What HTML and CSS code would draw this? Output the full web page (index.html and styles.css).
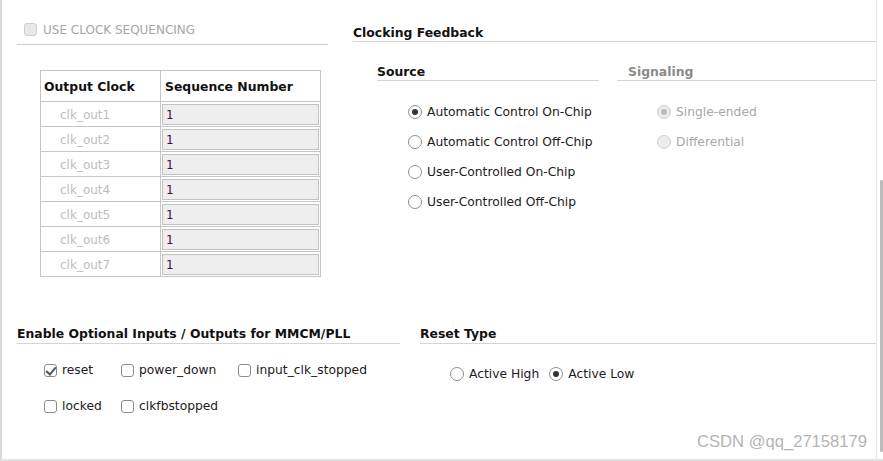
FILE: index.html
```html
<!DOCTYPE html>
<html>
<head>
<meta charset="utf-8">
<link rel="stylesheet" href="styles.css">
</head>
<body>
<div class="frame">
  <div class="content">
    <div class="top">
      <div class="seq">
        <div class="seq-head">
          <span class="cb disabled"></span>
          <span class="seq-label">USE CLOCK SEQUENCING</span>
        </div>
        <table class="seq-table">
          <tr><th class="c1">Output Clock</th><th class="c2">Sequence Number</th></tr>
          <tr><td class="name">clk_out1</td><td class="val"><div class="field">1</div></td></tr>
          <tr><td class="name">clk_out2</td><td class="val"><div class="field">1</div></td></tr>
          <tr><td class="name">clk_out3</td><td class="val"><div class="field">1</div></td></tr>
          <tr><td class="name">clk_out4</td><td class="val"><div class="field">1</div></td></tr>
          <tr><td class="name">clk_out5</td><td class="val"><div class="field">1</div></td></tr>
          <tr><td class="name">clk_out6</td><td class="val"><div class="field">1</div></td></tr>
          <tr><td class="name">clk_out7</td><td class="val"><div class="field">1</div></td></tr>
        </table>
      </div>
      <div class="fb">
        <div class="heading">Clocking Feedback</div>
        <div class="fb-body">
          <div class="source">
            <div class="subheading">Source</div>
            <div class="radios">
              <div class="opt"><span class="rd checked"></span>Automatic Control On-Chip</div>
              <div class="opt"><span class="rd"></span>Automatic Control Off-Chip</div>
              <div class="opt"><span class="rd"></span>User-Controlled On-Chip</div>
              <div class="opt"><span class="rd"></span>User-Controlled Off-Chip</div>
            </div>
          </div>
          <div class="signal">
            <div class="subheading muted">Signaling</div>
            <div class="radios">
              <div class="opt dim"><span class="rd disabled checked"></span>Single-ended</div>
              <div class="opt dim"><span class="rd disabled"></span>Differential</div>
            </div>
          </div>
        </div>
      </div>
    </div>
    <div class="bottom">
      <div class="io">
        <div class="heading">Enable Optional Inputs / Outputs for MMCM/PLL</div>
        <div class="io-grid">
          <div class="opt"><span class="cb checked"></span>reset</div>
          <div class="opt"><span class="cb"></span>power_down</div>
          <div class="opt"><span class="cb"></span>input_clk_stopped</div>
          <div class="opt"><span class="cb"></span>locked</div>
          <div class="opt"><span class="cb"></span>clkfbstopped</div>
        </div>
      </div>
      <div class="rst">
        <div class="heading">Reset Type</div>
        <div class="rst-row">
          <div class="opt"><span class="rd"></span>Active High</div>
          <div class="opt"><span class="rd checked"></span>Active Low</div>
        </div>
        <div class="watermark">CSDN @qq_27158179</div>
      </div>
    </div>
  </div>
  <div class="scroll">
    <div class="arrow up"></div>
    <div class="track"><div class="thumb"></div></div>
    <div class="arrow down"></div>
  </div>
</div>
</body>
</html>
```
FILE: styles.css
```css
* { box-sizing: border-box; }
html, body { margin: 0; padding: 0; background: #fff; }
body {
  font-family: "DejaVu Sans", Verdana, sans-serif;
  font-size: 12.3px;
  color: #1e1a22;
  width: 883px;
  height: 461px;
  overflow: hidden;
}
.frame {
  display: flex;
  width: 883px;
  height: 461px;
  border-left: 2px solid #d9d9d9;
  border-bottom: 2px solid #e2e2e2;
}
.content {
  flex: 1;
  border-right: 1px solid #e4e4e4;
  padding-left: 15px;
  display: flex;
  flex-direction: column;
}
.top { display: flex; height: 319px; }
.seq { width: 311px; padding-top: 22px; }
.seq-head {
  display: flex;
  align-items: center;
  gap: 6px;
  padding-left: 7px;
  height: 15px;
  border-bottom: 1px solid #cfcfcf;
  box-sizing: content-box;
  padding-bottom: 7px;
}
.seq-label { color: #a8a4aa; font-size: 12px; }

.cb {
  display: inline-block;
  width: 13px;
  height: 13px;
  border: 1px solid #8c8c8c;
  border-radius: 3px;
  background: #fff;
  position: relative;
  flex: none;
}
.cb.disabled { background: #e9e9ec; border-color: #cdcdd0; }
.cb.checked::after {
  content: "";
  position: absolute;
  left: 3px;
  top: 0px;
  width: 4px;
  height: 8px;
  border: solid #555;
  border-width: 0 2px 2px 0;
  transform: rotate(40deg);
}

.seq-table {
  margin: 25px 0 0 23px;
  border-collapse: collapse;
  width: 281px;
  font-size: 12px;
}
.seq-table th, .seq-table td { border: 1px solid #c6c6c6; padding: 0; }
.seq-table th {
  height: 31px;
  text-align: left;
  font-weight: bold;
  color: #111;
  padding-left: 3px;
  font-size: 12.4px;
}
.seq-table th.c2 { padding-left: 4px; }
.seq-table th.c1 { width: 120px; }
.seq-table td { height: 25px; }
.seq-table td.name { color: #bdbdbd; padding-left: 19px; padding-top: 1px; }
.seq-table td.val { padding: 1px; }
.field {
  height: 21px;
  background: #eeeeee;
  border: 1px solid #c2c2c2;
  font-family: "DejaVu Sans Mono", monospace;
  font-size: 12px;
  color: #4a0a46;
  padding-left: 3px;
  padding-top: 1px;
  line-height: 19px;
}

.fb { flex: 1; margin-left: 25px; padding-top: 24px; }
.heading {
  font-weight: bold;
  font-size: 12.4px;
  color: #111;
  height: 19px;
  padding-top: 1px;
  border-bottom: 1px solid #d4d4d4;
  line-height: 16px;
}
.fb .heading { height: 18px; }
.fb-body { display: flex; padding-left: 24px; padding-top: 22px; }
.source { width: 222px; }
.signal { flex: 1; margin-left: 18px; }
.subheading {
  font-weight: bold;
  font-size: 12.4px;
  color: #111;
  height: 17px;
  border-bottom: 1px solid #d4d4d4;
  line-height: 16px;
}
.signal .subheading { padding-left: 11px; }
.subheading.muted { color: #8a8a8a; }
.radios { display: flex; flex-direction: column; padding-top: 23px; padding-left: 31px; gap: 14px; }
.signal .radios { padding-left: 40px; }
.opt { display: flex; align-items: center; gap: 5px; height: 16px; white-space: nowrap; }
.opt.dim { color: #a9a6ac; }

.rd {
  display: inline-block;
  width: 14px;
  height: 14px;
  border: 1px solid #8e8e8e;
  border-radius: 50%;
  background: #fff;
  position: relative;
  flex: none;
}
.rd.checked::after {
  content: "";
  position: absolute;
  left: 3px; top: 3px;
  width: 6px; height: 6px;
  border-radius: 50%;
  background: #333;
}
.rd.disabled { border-color: #cfcfcf; background: #ececec; }
.rd.disabled.checked::after { background: #bdbdbd; }

.bottom { display: flex; flex: 1; }
.io { width: 383px; padding-top: 6px; }
.io-grid {
  display: grid;
  grid-template-columns: 77px 117px auto;
  row-gap: 20px;
  padding-left: 27px;
  padding-top: 18px;
}
.rst { flex: 1; margin-left: 20px; padding-top: 6px; display: flex; flex-direction: column; }
.rst-row { display: flex; gap: 10px; padding-left: 30px; padding-top: 22px; }
.watermark {
  margin-top: auto;
  align-self: flex-end;
  margin-right: 9px;
  margin-bottom: 7px;
  font-family: "Liberation Sans", Arial, sans-serif;
  font-size: 16.6px;
  color: #b4b4b4;
}

.scroll {
  width: 5px;
  display: flex;
  flex-direction: column;
  margin-left: 1px;
}
.arrow { height: 5px; }
.track { flex: 1; padding-top: 175px; }
.thumb { background: #bcbcbc; height: 272px; width: 3px; margin-left: 2px; border-radius: 1px; }
```
